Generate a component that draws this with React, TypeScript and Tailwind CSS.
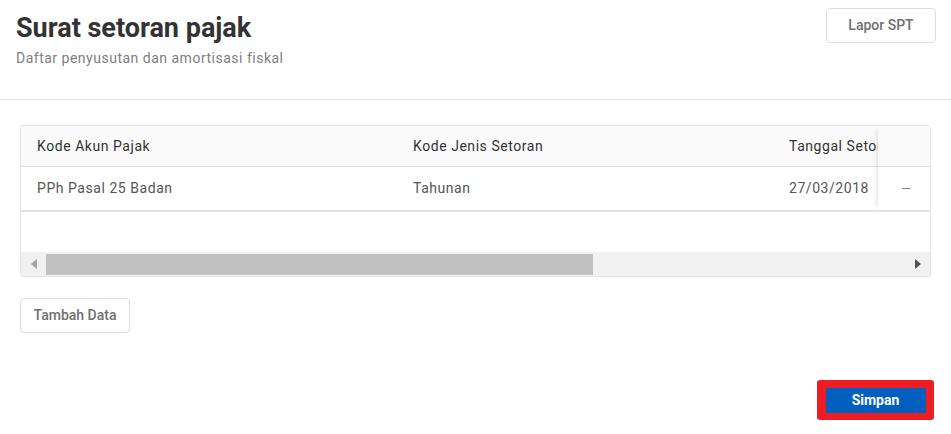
export default function App() {
  return (
    <div className="w-[951px] h-[434px] bg-white font-['Roboto',sans-serif] overflow-hidden">
      <div className="flex justify-between items-start pl-4 pr-[15px] pt-2 h-[100px] border-b border-[#e3e3e3]">
        <div className="pt-[3px]">
          <h1 className="text-[27px] leading-[35px] font-bold text-[#333333]">Surat setoran pajak</h1>
          <p className="mt-[3px] text-[14px] leading-[18px] tracking-[0.5px] text-[#808080]">
            Daftar penyusutan dan amortisasi fiskal
          </p>
        </div>
        <button className="w-[110px] h-[35px] border border-[#dddddd] rounded-[4px] text-[14px] font-medium text-[#707070]">
          Lapor SPT
        </button>
      </div>

      <div className="px-5 pt-[25px]">
        <div className="w-[911px] border border-[#e3e3e3] rounded-[3px] overflow-hidden">
          <div className="flex">
            <div className="flex-1 overflow-hidden">
              <div className="w-[1200px]">
                <div className="flex h-[41px] items-center bg-[#fafafa] border-b border-[#e3e3e3] text-[14px] tracking-[0.55px] text-[#333333]">
                  <div className="w-[376px] pl-4">Kode Akun Pajak</div>
                  <div className="w-[376px] pl-4">Kode Jenis Setoran</div>
                  <div className="w-[376px] pl-4 whitespace-nowrap">Tanggal Setoran</div>
                </div>
                <div className="flex h-[43px] items-center text-[14px] tracking-[0.55px] text-[#555555]">
                  <div className="w-[376px] pl-4">PPh Pasal 25 Badan</div>
                  <div className="w-[376px] pl-4">Tahunan</div>
                  <div className="w-[376px] pl-4">27/03/2018</div>
                </div>
              </div>
            </div>
            <div className="w-[52px] shrink-0 relative bg-white shadow-[-4px_0_5px_-3px_rgba(0,0,0,0.12)]">
              <div className="h-[41px] bg-[#fafafa] border-b border-[#e3e3e3]"></div>
              <div className="h-[43px] flex items-center justify-center pl-1 text-[#888888] text-[13px]">—</div>
            </div>
          </div>
          <div className="h-[42px] border-t-2 border-[#e3e3e3]"></div>
          <div className="flex items-center h-[24px] bg-[#f1f1f1]">
            <div className="w-[25px] flex items-center justify-center">
              <svg width="6" height="10" viewBox="0 0 6 10"><path d="M6 0 L0 5 L6 10 Z" fill="#a3a3a3" /></svg>
            </div>
            <div className="w-[547px] h-[21px] bg-[#c1c1c1]"></div>
            <div className="flex-1"></div>
            <div className="w-[25px] flex items-center justify-center">
              <svg width="6" height="10" viewBox="0 0 6 10"><path d="M0 0 L6 5 L0 10 Z" fill="#505050" /></svg>
            </div>
          </div>
        </div>

        <button className="mt-[21px] w-[110px] h-[35px] border border-[#dddddd] rounded-[4px] text-[14px] font-medium text-[#707070]">
          Tambah Data
        </button>
      </div>

      <div className="flex justify-end pr-[17px] mt-[47px]">
        <div className="w-[117px] h-[40px] bg-[#ee1c25] rounded-[3px] flex items-center justify-center">
          <div className="w-[100px] h-[25px] bg-[#005fbf] flex items-center justify-center text-white text-[14px] font-bold">
            Simpan
          </div>
        </div>
      </div>
    </div>
  );
}
